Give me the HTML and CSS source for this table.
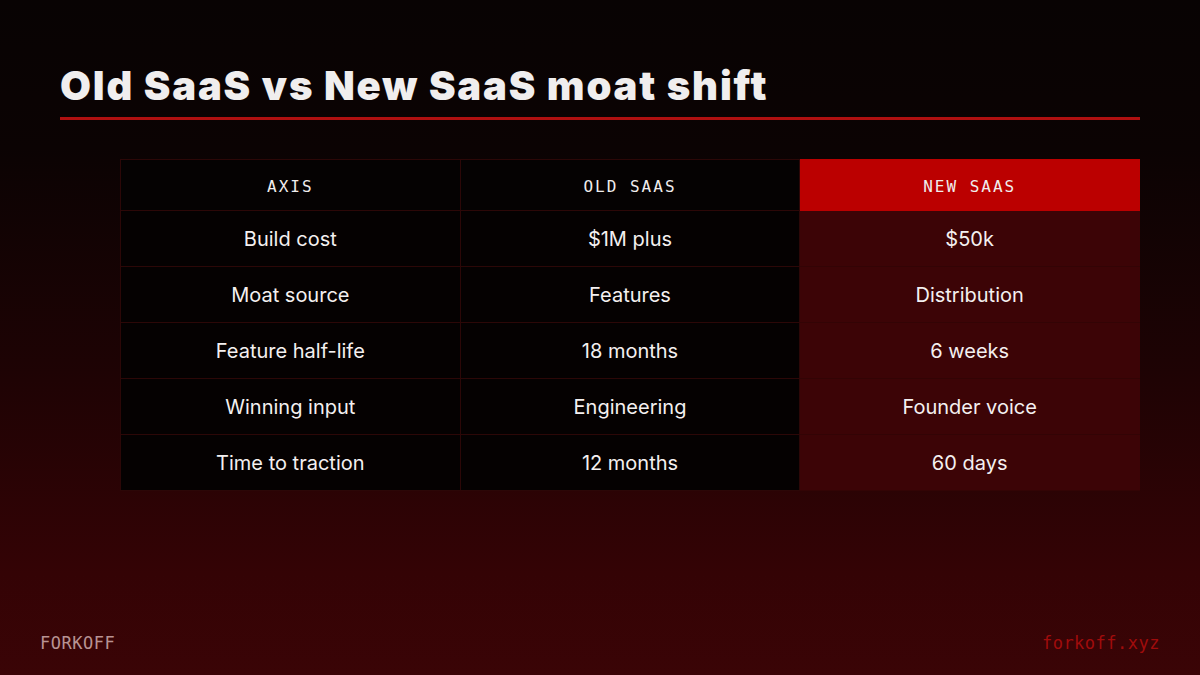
FILE: index.html
```html
<!DOCTYPE html>
<html lang="en">
<head>
<meta charset="utf-8">
<title>Old SaaS vs New SaaS moat shift</title>
<link rel="stylesheet" href="styles.css">
</head>
<body>
<div class="slide">
  <main class="main">
    <h1 class="title">Old SaaS vs New SaaS moat shift</h1>
    <table class="compare">
      <thead>
        <tr>
          <th>AXIS</th>
          <th>OLD SAAS</th>
          <th class="hl">NEW SAAS</th>
        </tr>
      </thead>
      <tbody>
        <tr><td>Build cost</td><td>$1M plus</td><td class="hl">$50k</td></tr>
        <tr><td>Moat source</td><td>Features</td><td class="hl">Distribution</td></tr>
        <tr><td>Feature half-life</td><td>18 months</td><td class="hl">6 weeks</td></tr>
        <tr><td>Winning input</td><td>Engineering</td><td class="hl">Founder voice</td></tr>
        <tr><td>Time to traction</td><td>12 months</td><td class="hl">60 days</td></tr>
      </tbody>
    </table>
  </main>
  <footer class="footer">
    <span class="brand">FORKOFF</span>
    <span class="url">forkoff.xyz</span>
  </footer>
</div>
</body>
</html>
```

FILE: styles.css
```css
html, body {
  margin: 0;
  padding: 0;
}

body {
  width: 1200px;
  height: 675px;
  overflow: hidden;
  background: linear-gradient(180deg, #080303 0%, #0b0303 22%, #1e0304 55%, #340305 85%, #3a0406 100%);
  font-family: "Inter", "Liberation Sans", sans-serif;
  color: #f2eeee;
}

.slide {
  height: 675px;
  display: flex;
  flex-direction: column;
  box-sizing: border-box;
}

.main {
  padding: 62px 60px 0;
}

.title {
  margin: 0;
  font-family: "Inter", "Liberation Sans", sans-serif;
  font-weight: 900;
  font-size: 40px;
  line-height: 48px;
  letter-spacing: 1.8px;
  color: #f0eeee;
  padding-bottom: 7px;
  border-bottom: 3px solid #b01010;
}

.compare {
  margin: 39px 60px 0;
  width: 1020px;
  border-collapse: collapse;
  table-layout: fixed;
}

.compare th,
.compare td {
  border: 1px solid #2c0707;
  text-align: center;
  padding: 0;
}

.compare th {
  height: 51px;
  padding-top: 2px;
  box-sizing: border-box;
  background: #050202;
  font-family: "DejaVu Sans Mono", "Liberation Mono", monospace;
  font-weight: 400;
  font-size: 16px;
  letter-spacing: 2px;
  color: #f0eded;
}

.compare th.hl {
  background: #bb0000;
  border-color: #bb0000;
}

.compare td {
  height: 55px;
  background: #050101;
  font-size: 20px;
  font-weight: 400;
  color: #f4f0f0;
}

.compare td.hl {
  background: #3c0406;
  border-color: #3c0406;
  border-bottom-color: #330405;
}

.footer {
  margin-top: auto;
  display: flex;
  justify-content: space-between;
  align-items: center;
  padding: 0 40px 22px;
  font-family: "DejaVu Sans Mono", "Liberation Mono", monospace;
  font-size: 17px;
}

.brand {
  color: #b89393;
  letter-spacing: 0.5px;
}

.url {
  color: #a00c0c;
  letter-spacing: 0.5px;
}
```
